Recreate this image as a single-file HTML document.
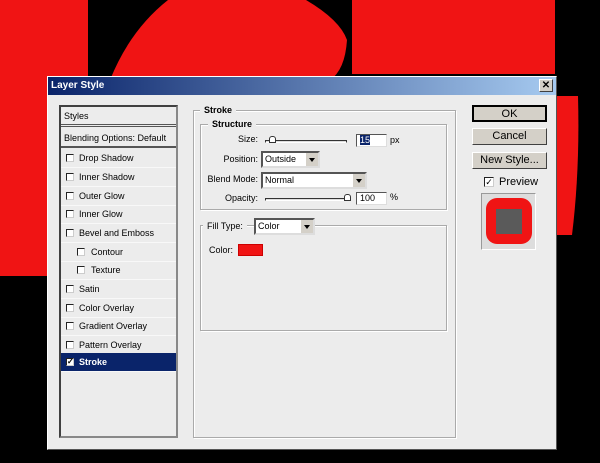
<!DOCTYPE html>
<html><head><style>
*{margin:0;padding:0;box-sizing:border-box}
body{width:600px;height:463px;background:#000;position:relative;overflow:hidden;font-family:"Liberation Sans",sans-serif;font-size:9px;color:#000}
.a{position:absolute}
.dlg{left:47px;top:76px;width:510px;height:374px;background:#ececec;border:1px solid #fff;border-right-color:#555;border-bottom-color:#555}
.title{left:0;top:0;width:508px;height:18px;background:linear-gradient(90deg,#0a246a,#a6caf0);color:#fff;font-weight:bold;font-size:10px;padding:3px 3px}
.x{right:3px;top:2px;width:14px;height:13px;background:#d4d0c8;border:1px solid #fff;border-right-color:#404040;border-bottom-color:#404040;color:#000;font-size:10px;line-height:11px;text-align:center;font-weight:bold}
.list{left:11px;top:28px;width:119px;height:333px;background:#ececec;border:2px solid #404040;border-right-color:#888;border-bottom-color:#888}
.row{position:absolute;left:0;width:115px;height:19px;border-bottom:1px solid #f8f8f8;padding-left:18px;line-height:18px;white-space:nowrap}
.cb{position:absolute;left:5px;top:5px;width:8px;height:8px;border:1px solid #222;border-right-color:#ccc;border-bottom-color:#ccc;background:#fff}
.grp{border:1px solid #aaa;box-shadow:1px 1px 0 #fff inset,1px 1px 0 #fff}
.leg{position:absolute;background:#ececec;font-weight:bold;padding:0 4px}
.lbl{position:absolute;text-align:right}
.inp{position:absolute;background:#fff;border:1px solid #555;border-right-color:#ddd;border-bottom-color:#ddd;padding-left:3px;line-height:11px}
.dd{position:absolute;background:#fff;border:2px solid #555;border-right-color:#ddd;border-bottom-color:#ddd;padding-left:2px;line-height:13px}
.dd i{position:absolute;right:0;top:0;width:13px;height:100%;background:#d4d0c8;border-left:1px solid #fff}
.dd i:after{content:"";position:absolute;left:3px;top:5px;border:3.5px solid transparent;border-top:4px solid #000}
.sl{position:absolute;height:3px;border:1px solid #333;border-bottom-color:#fff;background:#ddd}
.th{position:absolute;width:7px;height:7px;background:#fff;border:1px solid #333;border-radius:3px 3px 0 0}
.btn{position:absolute;left:424px;width:75px;height:17px;background:#d4d0c8;border:1px solid #fff;border-right-color:#404040;border-bottom-color:#404040;text-align:center;font-size:11px;line-height:15px}
</style></head><body>
<svg class="a" style="left:0;top:0" width="600" height="463">
<path fill="#f01414" d="M0 0H88V78Q80 80 70 80H47V276H0Z"/>
<path fill="#f01414" d="M168 0H306Q340 20 347 40Q345 70 330 80H110Q130 30 168 0Z"/>
<path fill="#f01414" d="M352 0H555V74H352Z"/>
<path fill="#f01414" d="M557 96H578Q580 170 572 235H557Z"/>
</svg>
<div class="a dlg">
<div class="a title">Layer Style</div>
<div class="a x">✕</div>
<div class="a list">
<div class="row" style="top:0;height:20px;padding-left:3px;border-bottom:3px double #555">Styles</div>
<div class="row" style="top:22px;padding-left:3px;border-bottom:2px solid #555">Blending Options: Default</div>
<div class="row" style="top:42px"><span class="cb"></span>Drop Shadow</div>
<div class="row" style="top:61px"><span class="cb"></span>Inner Shadow</div>
<div class="row" style="top:80px"><span class="cb"></span>Outer Glow</div>
<div class="row" style="top:98px"><span class="cb"></span>Inner Glow</div>
<div class="row" style="top:117px"><span class="cb"></span>Bevel and Emboss</div>
<div class="row" style="top:136px;padding-left:30px"><span class="cb" style="left:16px"></span>Contour</div>
<div class="row" style="top:154px;padding-left:30px"><span class="cb" style="left:16px"></span>Texture</div>
<div class="row" style="top:173px"><span class="cb"></span>Satin</div>
<div class="row" style="top:192px"><span class="cb"></span>Color Overlay</div>
<div class="row" style="top:210px"><span class="cb"></span>Gradient Overlay</div>
<div class="row" style="top:229px"><span class="cb"></span>Pattern Overlay</div>
<div class="row" style="top:246px;background:#0a246a;color:#fff;font-weight:bold;height:19px"><span class="cb" style="font-size:8px;line-height:6px;color:#000;text-align:center">✓</span>Stroke</div>
</div>
<div class="a grp" style="left:145px;top:33px;width:263px;height:328px"></div>
<div class="leg" style="left:152px;top:28px">Stroke</div>
<div class="a grp" style="left:152px;top:47px;width:247px;height:86px"></div>
<div class="leg" style="left:160px;top:42px">Structure</div>
<div class="lbl" style="left:150px;width:60px;top:57px">Size:</div>
<div class="sl" style="left:217px;top:63px;width:82px"></div>
<div class="th" style="left:221px;top:59px"></div>
<div class="inp" style="left:308px;top:57px;width:31px;height:13px"><span style="background:#0a246a;color:#fff">15</span></div>
<div class="a" style="left:342px;top:58px">px</div>
<div class="lbl" style="left:150px;width:60px;top:77px">Position:</div>
<div class="dd" style="left:213px;top:74px;width:59px;height:17px">Outside<i></i></div>
<div class="lbl" style="left:140px;width:70px;top:97px">Blend Mode:</div>
<div class="dd" style="left:213px;top:95px;width:106px;height:17px">Normal<i></i></div>
<div class="lbl" style="left:150px;width:60px;top:116px">Opacity:</div>
<div class="sl" style="left:217px;top:121px;width:86px"></div>
<div class="th" style="left:296px;top:117px"></div>
<div class="inp" style="left:308px;top:115px;width:31px;height:13px">100</div>
<div class="a" style="left:342px;top:115px">%</div>
<div class="a grp" style="left:152px;top:148px;width:247px;height:106px"></div>
<div class="leg" style="left:155px;top:144px;font-weight:normal;height:16px">Fill Type:</div>
<div class="dd" style="left:206px;top:141px;width:61px;height:17px">Color<i></i></div>
<div class="a" style="left:161px;top:168px">Color:</div>
<div class="a" style="left:190px;top:167px;width:25px;height:12px;background:#f01414;border:1px solid #c00"></div>
<div class="btn" style="top:28px;border:2px solid #000">OK</div>
<div class="btn" style="top:51px">Cancel</div>
<div class="btn" style="top:75px">New Style...</div>
<div class="cb a" style="left:436px;top:100px;width:10px;height:10px;font-size:9px;line-height:8px;text-align:center">✓</div>
<div class="a" style="left:451px;top:99px;font-size:11px">Preview</div>
<div class="a" style="left:433px;top:116px;width:55px;height:57px;background:#ddd;border:1px solid #999;border-right-color:#fff;border-bottom-color:#fff">
<div class="a" style="left:4px;top:4px;width:46px;height:46px;background:#f01414;border-radius:11px"></div>
<div class="a" style="left:14px;top:15px;width:26px;height:25px;background:#5a5a5a"></div>
</div>
</div>
</body></html>
